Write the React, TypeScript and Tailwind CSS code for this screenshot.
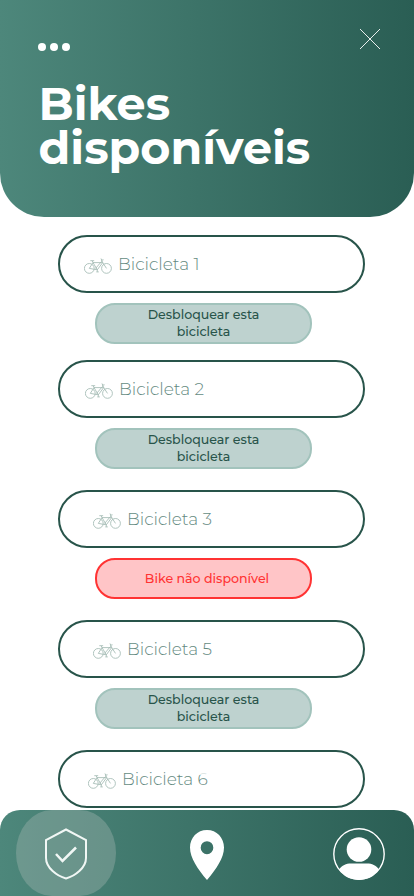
import React from "react";

const FONT = "font-['Montserrat','Inter',sans-serif]";

function Bike() {
  return (
    <svg className="mt-[3px] h-4 w-7 shrink-0" viewBox="0 0 28 16" fill="none" stroke="#a3bbb4" strokeWidth="0.85">
      <circle cx="5.3" cy="10.4" r="4.9" />
      <circle cx="22.5" cy="10.4" r="4.9" />
      <path d="M5.3 10.4L9 4.6H18.700L13.300 11.800L9 4.600M5.300 10.400L13.300 11.800M9 4.600L8.200 2.800M6.300 2.700H10.200M22.500 10.400L18.700 4.600L17 0.500M17 2.200L19.600 1.800M13.300 11.800V13.800M12.300 13.900H14.800M11.500 10.500L17.800 3.200" />
    </svg>
  );
}

function Row({ n, pad, last }: { n: number; pad: string; last?: boolean }) {
  return (
    <div className={`flex h-[58px] w-[307px] shrink-0 items-center rounded-[29px] border-2 border-[#28544a] bg-white ${pad}`}>
      <Bike />
      <span className="relative ml-[6px] whitespace-nowrap text-[17px] leading-5 font-light text-[#2f6356] opacity-75">
        Bicicleta {n}
        {last && <span className="absolute top-[4px] right-0 left-[13px] h-[2px] bg-white/75" />}
      </span>
    </div>
  );
}

function Action({ ok }: { ok: boolean }) {
  return ok ? (
    <button className="mt-[10px] ml-[37px] flex h-[41px] w-[217px] items-center justify-center rounded-[20px] border-2 border-[#a2c3bc] bg-[#bed2cf] pb-[2px] text-center text-[12.6px] leading-[17px] font-medium text-[#28544a]">
      <span>Desbloquear esta<br />bicicleta</span>
    </button>
  ) : (
    <button className="mt-[10px] ml-[37px] flex h-[41px] w-[217px] items-center justify-center rounded-[20px] border-2 border-[#ff3333] bg-[#ffc5c7] pl-[7px] text-[12.6px] leading-[17px] font-medium text-[#ff3333]">
      Bike não disponível
    </button>
  );
}

export default function App() {
  return (
    <div className={`flex h-[896px] w-[414px] flex-col overflow-hidden bg-white ${FONT}`}>
      <header className="flex h-[217px] shrink-0 flex-col rounded-b-[44px] bg-linear-to-r from-[#4d877b] to-[#2a5e54] pl-[38px] text-white">
        <div className="flex h-[82px] shrink-0 justify-between pr-[33px]">
          <div className="mt-[43px] flex h-2 gap-1">
            <i className="size-2 rounded-full bg-white" />
            <i className="size-2 rounded-full bg-white" />
            <i className="size-2 rounded-full bg-white" />
          </div>
          <svg className="mt-[28px] size-[22px]" viewBox="0 0 22 22" stroke="white" strokeWidth="0.9">
            <path d="M1 1L21 21M21 1L1 21" />
          </svg>
        </div>
        <h1 className="ml-[0.5px] w-fit text-[46px] leading-[44px] font-bold">Bikes<br />disponíveis</h1>
      </header>
      <main className="flex h-[593px] shrink-0 flex-col pt-[18px] pl-[58px]">
        <section className="h-[125px] shrink-0"><Row n={1} pad="pl-[24px]" /><Action ok /></section>
        <section className="h-[130px] shrink-0"><Row n={2} pad="pl-[25px]" /><Action ok /></section>
        <section className="h-[130px] shrink-0"><Row n={3} pad="pl-[33px]" /><Action ok={false} /></section>
        <section className="h-[130px] shrink-0"><Row n={5} pad="pl-[33px]" /><Action ok /></section>
        <Row n={6} pad="pl-[28px]" last />
      </main>
      <nav className="flex h-[86px] shrink-0 overflow-hidden rounded-t-[20px] bg-linear-to-r from-[#4d877b] to-[#2a5e54]">
        <div className="ml-4 flex h-[86px] w-[100px] items-center justify-center rounded-[36px/43px] bg-[#a0b4af]/40">
          <svg className="mt-[2px] h-[52px] w-[44px]" viewBox="0 0 44 52" fill="none" stroke="#f1f7f5" strokeWidth="2">
            <path d="M22 1.500L42 12V30C42 40 31 48 22 50.500C13 48 2 40 2 30V12Z" />
            <path d="M12 26L18.500 33L32 19.500" strokeWidth="2.500" />
          </svg>
        </div>
        <svg className="mt-5 ml-[74px] h-[50px] w-[34px]" viewBox="0 0 35 50" preserveAspectRatio="none">
          <path fill="white" fillRule="evenodd" d="M17.500 0C7.500 0 0 7.700 0 17.500C0 28 8 39 17.500 50C27 39 35 28 35 17.500C35 7.700 27.500 0 17.500 0ZM17.500 11.200A6.500 6.500 0 1 1 17.500 24.200A6.500 6.500 0 1 1 17.500 11.200Z" />
        </svg>
        <svg className="mt-[18px] ml-[109px] size-[52px]" viewBox="0 0 52 52">
          <circle cx="26" cy="26" r="25.200" fill="none" stroke="white" strokeWidth="1.400" />
          <circle cx="26" cy="21.500" r="12.300" fill="white" />
          <path fill="white" d="M6 41.500C9 37.200 13 35.500 18 35.500H34C39 35.500 43 37.200 46 41.500C41 48.500 34 52 26 52C18 52 11 48.500 6 41.500Z" />
        </svg>
      </nav>
    </div>
  );
}
